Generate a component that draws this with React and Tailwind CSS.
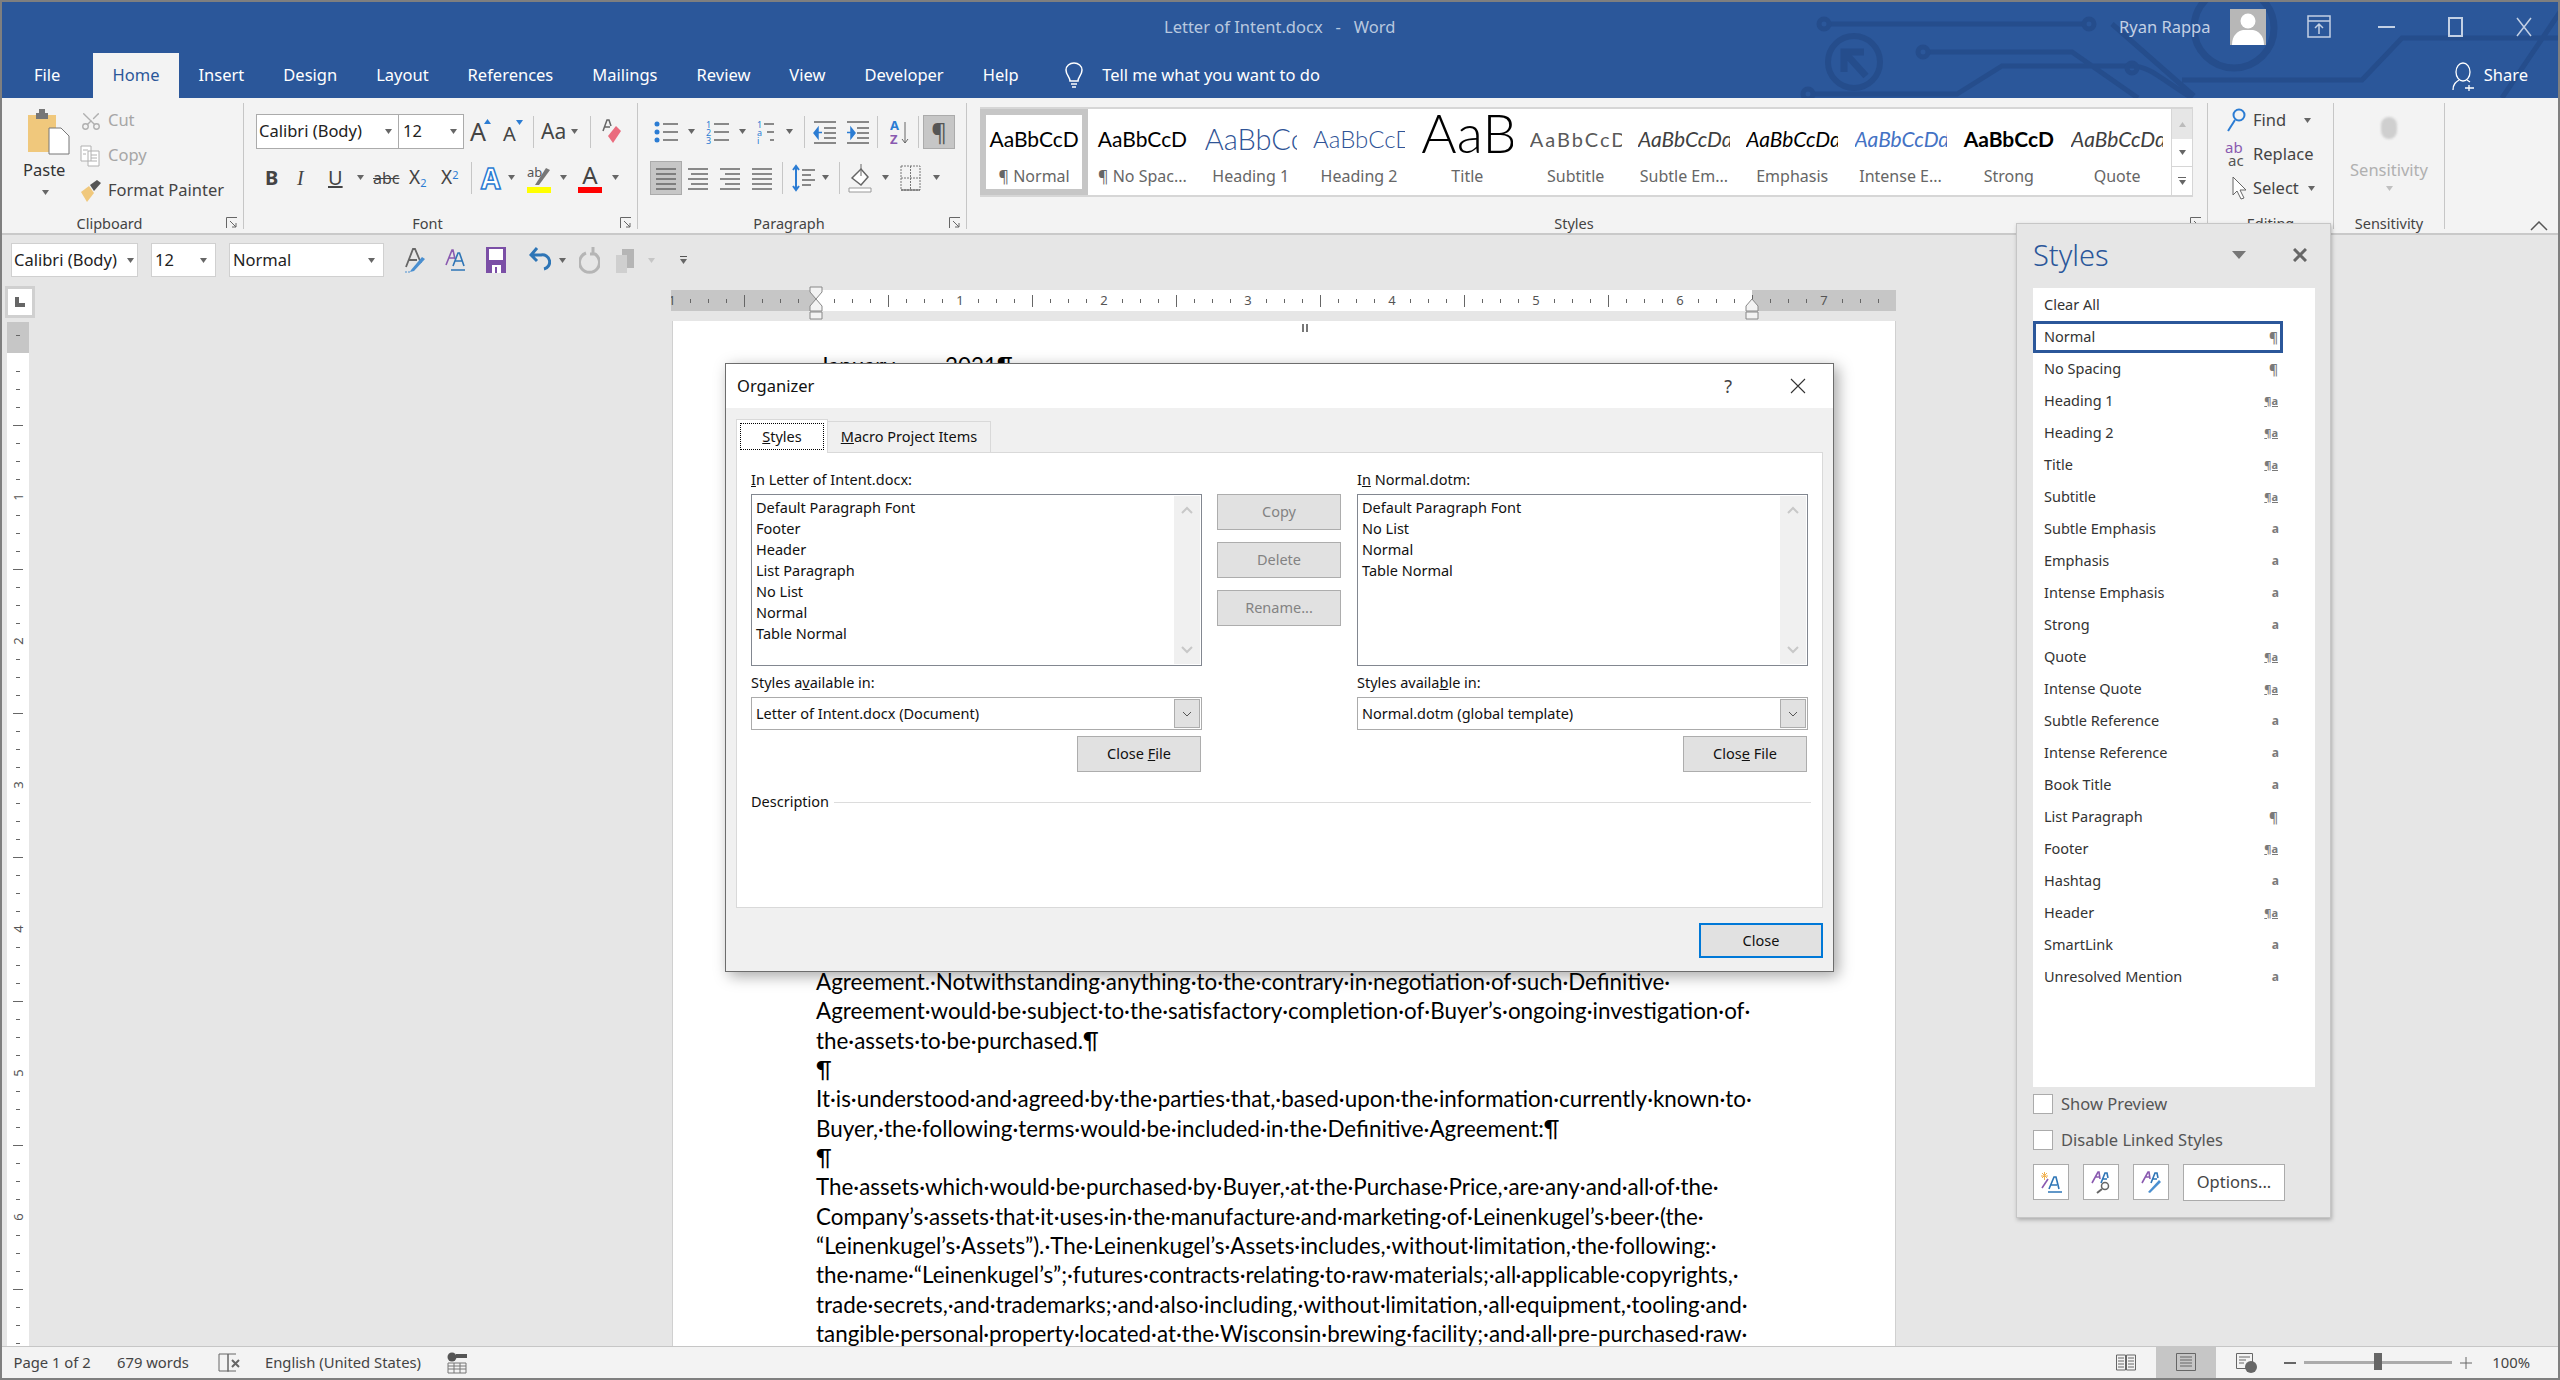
import { Scissors } from 'lucide-react';

const tabs = ['Insert', 'Design', 'Layout', 'References', 'Mailings', 'Review', 'View', 'Developer', 'Help'];

const gallery = [
  { label: '¶ Normal', text: 'AaBbCcD', cls: 'text-[21px] text-black', selected: true },
  { label: '¶ No Spac...', text: 'AaBbCcD', cls: 'text-[21px] text-black' },
  { label: 'Heading 1', text: 'AaBbCcDd', cls: 'text-[29px] font-light text-[#2f5496]' },
  { label: 'Heading 2', text: 'AaBbCcDd', cls: 'text-[24px] font-light text-[#2f5496]' },
  { label: 'Title', text: 'AaB', cls: 'text-[54px] font-light text-black leading-[48px] -mt-[12px]' },
  { label: 'Subtitle', text: 'AaBbCcDd', cls: 'text-[20px] tracking-[2px] text-[#5a5a5a]' },
  { label: 'Subtle Em...', text: 'AaBbCcDd', cls: 'text-[21px] italic text-[#404040]' },
  { label: 'Emphasis', text: 'AaBbCcDd', cls: 'text-[21px] italic text-black' },
  { label: 'Intense E...', text: 'AaBbCcDd', cls: 'text-[21px] italic text-[#4472c4]' },
  { label: 'Strong', text: 'AaBbCcD', cls: 'text-[21px] font-bold text-black' },
  { label: 'Quote', text: 'AaBbCcDd', cls: 'text-[21px] italic text-[#404040]' },
];

const paneStyles = [
  ['Clear All', ''], ['Normal', 'p'], ['No Spacing', 'p'], ['Heading 1', 'l'], ['Heading 2', 'l'], ['Title', 'l'], ['Subtitle', 'l'],
  ['Subtle Emphasis', 'a'], ['Emphasis', 'a'], ['Intense Emphasis', 'a'], ['Strong', 'a'], ['Quote', 'l'], ['Intense Quote', 'l'],
  ['Subtle Reference', 'a'], ['Intense Reference', 'a'], ['Book Title', 'a'], ['List Paragraph', 'p'], ['Footer', 'l'], ['Hashtag', 'a'],
  ['Header', 'l'], ['SmartLink', 'a'], ['Unresolved Mention', 'a'],
];

const docLines = [
  'Agreement.·Notwithstanding·anything·to·the·contrary·in·negotiation·of·such·Definitive·',
  'Agreement·would·be·subject·to·the·satisfactory·completion·of·Buyer’s·ongoing·investigation·of·',
  'the·assets·to·be·purchased.¶',
  '¶',
  'It·is·understood·and·agreed·by·the·parties·that,·based·upon·the·information·currently·known·to·',
  'Buyer,·the·following·terms·would·be·included·in·the·Definitive·Agreement:¶',
  '¶',
  'The·assets·which·would·be·purchased·by·Buyer,·at·the·Purchase·Price,·are·any·and·all·of·the·',
  'Company’s·assets·that·it·uses·in·the·manufacture·and·marketing·of·Leinenkugel’s·beer·(the·',
  '“Leinenkugel’s·Assets”).·The·Leinenkugel’s·Assets·includes,·without·limitation,·the·following:·',
  'the·name·“Leinenkugel’s”;·futures·contracts·relating·to·raw·materials;·all·applicable·copyrights,·',
  'trade·secrets,·and·trademarks;·and·also·including,·without·limitation,·all·equipment,·tooling·and·',
  'tangible·personal·property·located·at·the·Wisconsin·brewing·facility;·and·all·pre-purchased·raw·',
];

function Drop({ className = '', color = '#666' }) {
  return (
    <svg width="7" height="5" viewBox="0 0 7 5" className={`shrink-0 ${className}`}>
      <path d="M0 0h7L3.5 5z" fill={color} />
    </svg>
  );
}

function Sep({ className = '' }) {
  return <div className={`w-px h-[32px] bg-[#c6c6c6] shrink-0 ${className}`} />;
}

function Launcher() {
  return (
    <svg width="12" height="12" viewBox="0 0 12 12" className="shrink-0">
      <path d="M.5 11V.5H11M4 4l6 6M10 6v4H6" fill="none" stroke="#666" />
    </svg>
  );
}

function Group({ width, label, launcher, children }) {
  return (
    <div className={`${width} h-[126px] mt-[5px] border-r border-[#c6c6c6] flex flex-col shrink-0`}>
      <div className="h-[111px] shrink-0">{children}</div>
      <div className={`h-[20px] shrink-0 relative flex items-center justify-center text-[14.5px] text-[#444] ${launcher ? 'pr-[26px]' : ''}`}>
        {label}
        {launcher && <div className="absolute right-[5px] top-[3px]"><Launcher /></div>}
      </div>
    </div>
  );
}

function Lines({ w = 20, rows, x = [] }) {
  return (
    <svg width={w} height="24" viewBox={`0 0 ${w} 24`} className="shrink-0">
      {rows.map((y, i) => (
        <path key={i} d={`M${x[i] ?? 0} ${y}H${w}`} stroke="#666" strokeWidth="1.5" />
      ))}
    </svg>
  );
}

function ListIcon({ kind }) {
  const marks = kind === 'bullet'
    ? [4, 12, 20].map(y => <circle key={y} cx="3" cy={y} r="2.5" fill="#2b7cd3" />)
    : ['1', '2', '3'].map((t, i) => (
        <text key={t} x="1" y={8 + i * 8} fontSize="9" fill="#2b7cd3">{kind === 'multi' ? ['1', 'a', 'i'][i] : t}</text>
      ));
  return (
    <svg width="24" height="24" viewBox="0 0 24 24" className="shrink-0">
      {marks}
      {[4, 12, 20].map((y, i) => (
        <path key={y} d={`M${kind === 'multi' ? 8 + i * 3 : 9} ${y}H${kind === 'multi' ? 18 : 24}`} stroke="#666" strokeWidth="1.5" />
      ))}
    </svg>
  );
}

function Indent({ flip }) {
  return (
    <svg width="24" height="24" viewBox="0 0 24 24" className="shrink-0">
      <path d="M1 2h22M11 8h12M11 13h12M11 18h12M1 23h22" stroke="#666" strokeWidth="1.4" />
      <path d={flip ? 'M1 12.500h5M5 8l4 5-4 5z' : 'M9 12.500H4M5 8l-4 5 4 5z'} fill="#2b7cd3" stroke="#2b7cd3" strokeWidth="1.5" />
    </svg>
  );
}

function ClearFormatIcon() {
  return (
    <svg width="22" height="26" viewBox="0 0 22 26" className="shrink-0">
      <path d="M2 20 9 2h2l6 14M5 13h8" fill="none" stroke="#666" strokeWidth="1.800" />
      <path d="M7 23 18 10l3 2-11 12-4 1z" fill="#4a8fd0" />
      <path d="M1 25h5" stroke="#4a8fd0" strokeDasharray="2 1" />
    </svg>
  );
}

function TwoAIcon() {
  return (
    <svg width="20" height="26" viewBox="0 0 20 26" className="shrink-0">
      <path d="M1 18 7 3h1l2 9M4 11h5" fill="none" stroke="#8a5ab0" strokeWidth="1.600" />
      <path d="M8 19 13 6h1.500L19 19M10 14h7M6 23h14" fill="none" stroke="#2e75b6" strokeWidth="1.600" />
    </svg>
  );
}

function PaneIcon({ kind }) {
  return (
    <svg width="22" height="24" viewBox="0 0 22 24">
      {kind === 'new' && <path d="M1 6h7M4.500 2v8M2 3l5 5M7 3 2 8" stroke="#f0b050" />}
      <path d={kind === 'new' ? 'M2 18 8 9' : 'M2 13 8 2h1l1 7M5 7h4'} fill="none" stroke="#8a5ab0" strokeWidth="1.6" />
      <path d={kind === 'new' ? 'M9 19 14 7h2l3 12M11 15h6M8 22h14' : 'M11 13 15 3h2l1 5M13 9h4'} fill="none" stroke="#2e75b6" strokeWidth="1.6" />
      {kind === 'find' && <><circle cx="15" cy="16" r="3.500" fill="none" stroke="#666" strokeWidth="1.500" /><path d="M12 19l-5 4" stroke="#666" strokeWidth="2" /></>}
      {kind === 'pen' && <path d="M8 22 19 10l2 2L10 23z" fill="#4a8fd0" />}
    </svg>
  );
}

function Circuit() {
  return (
    <svg width="2558" height="96" viewBox="0 2 2558 96" className="absolute left-0 top-0 pointer-events-none" fill="none" stroke="#254d8c" strokeWidth="5">
      <path d="M1826 24h257M1925 52h145l66 46M1810 94h145l45-28h130c18 0 30 14 60 32M2110 24l82 72M2180 80h180l40-42h158M2500 98l58-86" />
      <circle cx="1822" cy="24" r="5" />
      <circle cx="2087" cy="24" r="5" />
      <circle cx="1921" cy="52" r="5" />
      <circle cx="1806" cy="94" r="5" />
      <circle cx="2130" cy="68" r="5" />
      <circle cx="1852" cy="62" r="26" strokeWidth="6" />
      <circle cx="2232" cy="28" r="40" strokeWidth="7" />
      <path d="M1842 72V52h20M1844 54l20 22" strokeWidth="7" />
    </svg>
  );
}

function HRuler() {
  const ticks = [];
  for (let k = -8; k <= 60; k++) ticks.push(k);
  return (
    <svg width="1225" height="34" viewBox="671 287 1225 34" className="shrink-0">
      <rect x="671" y="291" width="1225" height="21" fill="#fff" />
      <rect x="671" y="291" width="145" height="21" fill="#c6c6c6" />
      <rect x="1752" y="291" width="144" height="21" fill="#c6c6c6" />
      {ticks.map(k => {
        const x = 816 + 18 * k;
        if (k === 0) return null;
        if (k % 8 === 0) {
          return <text key={k} x={x} y="306" fontSize="13" fill="#555" textAnchor="middle">{Math.abs(k / 8)}</text>;
        }
        const h = k % 4 === 0 ? 6 : 2;
        return <path key={k} d={`M${x + 0.5} ${302 - h}V${302 + h}`} stroke="#666" />;
      })}
      <path d="M810 288h12v5l-6 7-6-7zM810 312v-5l6-7 6 7v5zM810 313h12v7h-12z" fill="#f3f3f3" stroke="#888" />
      <path d="M1746 312v-5l6-7 6 7v5zM1746 313h12v7h-12z" fill="#f3f3f3" stroke="#888" />
    </svg>
  );
}

function VRuler() {
  const ticks = [];
  for (let k = -1; k <= 56; k++) ticks.push(k);
  return (
    <svg width="22" height="1025" viewBox="7 321 22 1025" className="shrink-0">
      <rect x="7" y="321" width="22" height="1025" fill="#fff" />
      <rect x="7" y="321" width="22" height="31" fill="#c6c6c6" />
      {ticks.map(k => {
        const y = 352 + 18 * k;
        if (k === 0) return null;
        if (k % 8 === 0) {
          return <text key={k} x="18" y={y} fontSize="13" fill="#555" textAnchor="middle" dominantBaseline="central" transform={`rotate(-90 18 ${y})`}>{k / 8}</text>;
        }
        const h = k % 4 === 0 ? 5 : 2;
        return <path key={k} d={`M${18 - h} ${y + 0.5}H${18 + h}`} stroke="#666" />;
      })}
    </svg>
  );
}

function StyleMark({ type }) {
  if (type === 'p') return <span className="text-[14px] font-semibold text-[#7a7a7a] mr-[1px]">¶</span>;
  if (type === 'l') return <span className="text-[11px] font-bold underline text-[#7a7a7a] mr-[1px]">¶a</span>;
  if (type === 'a') return <span className="text-[12px] font-bold text-[#7a7a7a]">a</span>;
  return null;
}

function ListBox({ items }) {
  return (
    <div className="h-[172px] border border-[#828790] bg-white flex text-[14.5px] text-[#111]">
      <div className="flex-1 pl-[4px] pt-[2px]">
        {items.map(t => <div key={t} className="h-[21px] leading-[21px]">{t}</div>)}
      </div>
      <div className="w-[26px] my-[1px] mr-[1px] bg-[#f0f0f0] flex flex-col justify-between items-center py-[10px]">
        <svg width="12" height="8" viewBox="0 0 12 8"><path d="M1 7l5-5 5 5" fill="none" stroke="#c8c8c8" strokeWidth="2" /></svg>
        <svg width="12" height="8" viewBox="0 0 12 8"><path d="M1 1l5 5 5-5" fill="none" stroke="#c8c8c8" strokeWidth="2" /></svg>
      </div>
    </div>
  );
}

function Combo({ text }) {
  return (
    <div className="h-[33px] mt-[4px] border border-[#ababab] bg-white flex items-center text-[14.5px] text-[#111]">
      <div className="flex-1 pl-[4px]">{text}</div>
      <div className="w-[26px] h-[29px] mr-[1px] bg-[#e1e1e1] border border-[#adadad] flex items-center justify-center">
        <svg width="10" height="6" viewBox="0 0 10 6"><path d="M1 1l4 4 4-4" fill="none" stroke="#555" /></svg>
      </div>
    </div>
  );
}

function DlgBtn({ children, disabled, className = '' }) {
  return (
    <div className={`w-[124px] h-[36px] bg-[#e1e1e1] border border-[#adadad] flex items-center justify-center text-[14.5px] ${disabled ? 'text-[#838383]' : 'text-[#111]'} ${className}`}>
      {children}
    </div>
  );
}

export default function App() {
  return (
    <div className="w-[2560px] h-[1380px] relative overflow-hidden flex flex-col border-2 border-[#7f7f7f] bg-[#e6e6e6] font-['Noto_Sans',sans-serif]">
      {/* Title bar and tabs */}
      <div className="h-[96px] shrink-0 bg-[#2b579a] relative text-white">
        <Circuit />
        <div className="h-[51px] relative flex items-center">
          <div className="ml-[1162px] w-[236px] text-[16.500px] text-[#b8c8df] whitespace-pre">Letter of Intent.docx   -   Word</div>
          <div className="ml-[719px] w-[95px] text-[16.500px] text-[#c3d0e4] whitespace-nowrap">Ryan Rappa</div>
          <div className="ml-[16px] w-[36px] h-[36px] bg-[#b7b7b7] mt-[-2px] overflow-hidden shrink-0">
            <svg width="36" height="36" viewBox="0 0 36 36"><circle cx="18" cy="12" r="7.500" fill="#fff" /><path d="M2 36c0-10 6-14 11-15h10c5 1 11 5 11 15z" fill="#fff" /></svg>
          </div>
          <svg width="26" height="26" viewBox="0 0 26 26" className="ml-[40px] mt-[-2px]" fill="none" stroke="#c3d0e4" strokeWidth="1.500"><path d="M2 2h22v21H2zM2 7h22M13 20v-9M9 14l4-4 4 4" /></svg>
          <div className="ml-[46px] w-[17px] h-[2px] bg-[#c3d0e4] mt-[-2px]" />
          <div className="ml-[53px] w-[15px] h-[20px] border-2 border-[#c3d0e4] mt-[-2px]" />
          <svg width="16" height="20" viewBox="0 0 16 20" className="ml-[53px] mt-[-2px]" fill="none" stroke="#c3d0e4" strokeWidth="1.500"><path d="M1 1l14 18M15 1 1 19" /></svg>
        </div>
        <div className="h-[45px] relative flex items-stretch text-[16.500px]">
          <div className="w-[91px] pl-[32px] flex items-center">File</div>
          <div className="w-[86px] bg-[#f3f3f3] text-[#2b579a] flex items-center justify-center">Home</div>
          {tabs.map(t => (
            <div key={t} className="px-[19.500px] flex items-center">{t}</div>
          ))}
          <svg width="20" height="28" viewBox="0 0 20 28" className="ml-[26px] self-center" fill="none" stroke="#fff" strokeWidth="1.500"><path d="M6 19c0-4-4-6-4-11a8 7 0 0 1 16 0c0 5-4 7-4 11zM7 22h6M8 25h4" /></svg>
          <div className="ml-[18px] flex items-center">Tell me what you want to do</div>
          <div className="ml-auto mr-[30px] flex items-center gap-[8px]">
            <svg width="24" height="30" viewBox="0 0 24 30" fill="none" stroke="#fff" strokeWidth="1.300"><ellipse cx="11" cy="11" rx="7" ry="9" /><path d="M1 29c0-6 3-8 6-10M15 19l3 2M17 24v6M13 27h9" /></svg>
            <span>Share</span>
          </div>
        </div>
      </div>

      {/* Ribbon */}
      <div className="h-[137px] shrink-0 bg-[#f3f3f3] border-b-2 border-[#c9c9c9] flex relative text-[#444]">
        <Group width="w-[242px]" label="Clipboard" launcher>
          <div className="flex">
            <div className="w-[78px] pl-[26px] pt-[6px] flex flex-col">
              <svg width="42" height="46" viewBox="0 0 42 46">
                <path d="M0 6h28v37H0z" fill="#f0c87c" />
                <path d="M8 4h3V0h6v4h3v6H8z" fill="#777" />
                <path d="M21 19h12l8 8v18H21z" fill="#fff" stroke="#777" />
              </svg>
              <div className="text-[16.500px] mt-[3px] ml-[-5px] text-[#333]">Paste</div>
              <Drop className="mt-[7px] ml-[14px]" />
            </div>
            <div className="text-[16.500px] flex flex-col">
              {[
                ['Cut', <Scissors key="c" size={22} strokeWidth={1.5} color="#b0b0b0" className="-rotate-90" />],
                ['Copy', <svg key="p" width="20" height="22" viewBox="0 0 20 22" fill="#fff" stroke="#b0b0b0"><path d="M1 1h10v15H1zM8 6h11v15H8zM3 5h5M3 9h3M11 10h6M11 13h6M11 16h6" /></svg>],
              ].map(([t, icon]) => (
                <div key={t} className="h-[35px] flex items-center text-[#a6a6a6]">
                  <div className="w-[28px] flex">{icon}</div>
                  {t}
                </div>
              ))}
              <div className="h-[35px] flex items-center">
                <svg width="22" height="22" viewBox="0 0 22 22" className="w-[22px] mr-[6px]"><path d="M1 12l8-6 5 7-7 9z" fill="#f0c87c" /><path d="M10 5l7-5 4 3-7 8z" fill="#555" /></svg>
                Format Painter
              </div>
            </div>
          </div>
        </Group>

        <Group width="w-[394px]" label="Font" launcher>
          <div className="pt-[11px]">
            <div className="h-[35px] flex items-center">
              <div className="ml-[12px] w-[208px] h-[35px] bg-white border border-[#ababab] flex text-[16.500px] text-[#222] shrink-0">
                <div className="w-[142px] border-r border-[#ababab] flex items-center pl-[2px] pr-[6px] justify-between">Calibri (Body)<Drop /></div>
                <div className="flex-1 flex items-center pl-[4px] pr-[6px] justify-between">12<Drop /></div>
              </div>
              <div className="ml-[6px] w-[18px] relative text-[25px] leading-none">A<Drop className="absolute right-[-3px] top-0 rotate-180" color="#2b7cd3" /></div>
              <div className="ml-[15px] w-[14px] relative text-[20px] leading-none mt-[4px]">A<Drop className="absolute right-[-6px] top-[-4px]" color="#2b7cd3" /></div>
              <Sep className="ml-[16px]" />
              <div className="ml-[7px] w-[24px] text-[21px] leading-none">Aa</div>
              <Drop className="ml-[6px]" />
              <Sep className="ml-[12px]" />
              <svg width="21" height="26" viewBox="0 0 21 26" className="ml-[10px]"><path d="M2 12 6 1h2l2 6M4 8h5" fill="none" stroke="#666" strokeWidth="1.500" /><path d="M7 17 15 7l5 5-8 12z" fill="#ea6b7d" /></svg>
            </div>
            <div className="h-[35px] mt-[11px] flex items-center text-[#444]">
              <span className="ml-[21px] w-[13px] text-[20px] font-bold">B</span>
              <span className="ml-[19px] w-[11px] text-[20px] italic font-['Liberation_Serif',serif]">I</span>
              <span className="ml-[20px] w-[15px] text-[20px] underline">U</span>
              <Drop className="ml-[14px]" />
              <span className="ml-[9px] w-[26px] text-[16px] line-through">abc</span>
              <span className="ml-[10px] w-[20px] text-[19px] leading-none">X<sub className="text-[11px] text-[#2b7cd3]">2</sub></span>
              <span className="ml-[12px] w-[21px] text-[19px] leading-none">X<sup className="text-[11px] text-[#2b7cd3]">2</sup></span>
              <Sep className="ml-[9px]" />
              <span className="ml-[9px] w-[21px] text-[28px] leading-none text-white [-webkit-text-stroke:1.500px_#2b7cd3] font-bold">A</span>
              <Drop className="ml-[6px]" />
              <div className="ml-[12px] w-[24px] h-[30px] flex flex-col justify-end">
                <svg width="24" height="20" viewBox="0 0 24 20"><text x="0" y="11" fontSize="13" fill="#555">ab</text><path d="M8 19 19 2l4 2-11 15z" fill="#777" /></svg>
                <div className="h-[6px] bg-[#ffff00] mt-[1px]" />
              </div>
              <Drop className="ml-[9px]" />
              <div className="ml-[11px] w-[24px] h-[30px] flex flex-col items-center leading-none">
                <span className="text-[24px] h-[24px]">A</span>
                <div className="w-full h-[6px] bg-[#ff0000]" />
              </div>
              <Drop className="ml-[10px]" />
            </div>
          </div>
        </Group>

        <Group width="w-[329px]" label="Paragraph" launcher>
          <div className="pt-[11px]">
            <div className="h-[35px] flex items-center">
              <div className="ml-[16px]"><ListIcon kind="bullet" /></div>
              <Drop className="ml-[10px]" />
              <div className="ml-[10px]"><ListIcon kind="num" /></div>
              <Drop className="ml-[10px]" />
              <div className="ml-[10px]"><ListIcon kind="multi" /></div>
              <Drop className="ml-[6px]" />
              <Sep className="ml-[11px]" />
              <div className="ml-[8px]"><Indent /></div>
              <div className="ml-[9px]"><Indent flip /></div>
              <Sep className="ml-[7px]" />
              <div className="ml-[12px] w-[20px] h-[28px] relative">
                <svg width="20" height="28" viewBox="0 0 20 28"><text x="0" y="12" fontSize="13" fontWeight="700" fill="#2b7cd3">A</text><text x="0" y="26" fontSize="13" fontWeight="700" fill="#8a5ab0">Z</text><path d="M15 4v21M12 21l3 4 3-4" fill="none" stroke="#666" /></svg>
              </div>
              <Sep className="ml-[8px]" />
              <div className="ml-[4px] w-[32px] h-[34px] bg-[#c6c6c6] border border-[#ababab] flex items-center justify-center text-[24px] text-[#555] leading-none">¶</div>
            </div>
            <div className="h-[35px] mt-[11px] flex items-center">
              <div className="ml-[12px] w-[32px] h-[34px] bg-[#c6c6c6] border border-[#ababab] flex items-center justify-center"><Lines w={20} rows={[3, 8, 13, 18, 23]} x={[0, 0, 0, 0, 0]} /></div>
              <div className="ml-[6px]"><Lines rows={[3, 8, 13, 18, 23]} x={[0, 3, 0, 3, 0]} /></div>
              <div className="ml-[12px]"><Lines rows={[3, 8, 13, 18, 23]} x={[0, 5, 0, 5, 0]} /></div>
              <div className="ml-[12px]"><Lines rows={[3, 8, 13, 18, 23]} /></div>
              <Sep className="ml-[10px]" />
              <svg width="23" height="28" viewBox="0 0 23 28" className="ml-[9px]"><path d="M4 2v24M1 6l3-4 3 4M1 22l3 4 3-4" fill="none" stroke="#2b7cd3" strokeWidth="2" /><path d="M10 6h13M10 11h9M10 16h13M10 21h9" stroke="#666" strokeWidth="1.500" /></svg>
              <Drop className="ml-[7px]" />
              <Sep className="ml-[10px]" />
              <svg width="24" height="30" viewBox="0 0 24 30" className="ml-[8px]"><path d="M4 15 13 6l7 8-7 8z" fill="#fff" stroke="#666" strokeWidth="1.500" /><path d="M13 1v12" stroke="#666" /><path d="M1 25h22v4H1z" fill="#fff" stroke="#999" /></svg>
              <Drop className="ml-[10px]" />
              <svg width="21" height="26" viewBox="0 0 21 26" className="ml-[11px]" fill="none" stroke="#777" strokeDasharray="2 1"><path d="M1 1h19v24H1zM10.500 1v24M1 13h19" /><path d="M1 25h19" stroke="#555" strokeDasharray="none" /></svg>
              <Drop className="ml-[12px]" />
            </div>
          </div>
        </Group>

        <Group width="w-[1241px]" label="Styles" launcher>
          <div className="ml-[13px] mt-[4px] w-[1213px] h-[90px] flex bg-white border-y-2 border-[#d6d6d6]">
            <div className="flex-1 flex">
              {gallery.map(g => (
                <div key={g.label} className={`w-[108.300px] shrink-0 font-['Lato',sans-serif] flex flex-col items-center ${g.selected ? 'border-[6px] border-[#c6c6c6]' : 'pt-[6px]'}`}>
                  <div className="w-[92px] h-[48px] overflow-hidden whitespace-nowrap flex items-center">
                    <span className={`mx-auto ${g.cls}`}>{g.text}</span>
                  </div>
                  <div className="h-[26px] flex items-center text-[16px] text-[#666] font-['Noto_Sans',sans-serif] whitespace-nowrap">{g.label}</div>
                </div>
              ))}
            </div>
            <div className="w-[22px] shrink-0 border-x border-[#d6d6d6] flex flex-col">
              <div className="h-[30px] bg-[#e6e6e6] flex items-center justify-center"><Drop className="rotate-180" color="#bbb" /></div>
              <div className="h-[28px] border-b border-[#d6d6d6] flex items-center justify-center"><Drop /></div>
              <div className="flex-1 flex flex-col items-center justify-center gap-[2px]"><div className="w-[8px] h-px bg-[#666]" /><Drop /></div>
            </div>
          </div>
        </Group>

        <Group width="w-[126px]" label="Editing">
          <div className="text-[16.500px] flex flex-col">
            <div className="h-[34px] flex items-center">
              <svg width="19" height="24" viewBox="0 0 19 24" className="ml-[19px]" fill="none" stroke="#2b7cd3" strokeWidth="2"><circle cx="12" cy="7" r="5.500" /><path d="M8 12 1 23" /></svg>
              <span className="ml-[7px]">Find</span>
              <Drop className="ml-[18px]" />
            </div>
            <div className="h-[34px] flex items-center">
              <div className="ml-[17px] w-[25px] text-[15px] leading-[13px]"><div className="text-[#8a5ab0]">ab</div><div className="text-[#555] ml-[3px]">ac</div></div>
              <span className="ml-[3px]">Replace</span>
            </div>
            <div className="h-[34px] flex items-center">
              <svg width="15" height="24" viewBox="0 0 15 24" className="ml-[24px]"><path d="M1 1v18l4-4 4 8 3-1-4-8h6z" fill="#fff" stroke="#666" /></svg>
              <span className="ml-[6px]">Select</span>
              <Drop className="ml-[9px]" />
            </div>
          </div>
        </Group>

        <Group width="w-[111px]" label="Sensitivity">
          <div className="flex flex-col items-center text-[16.500px] text-[#b0b0b0]">
            <div className="w-[16px] h-[22px] mt-[14px] rounded-full bg-[#cfcfcf] blur-[1px]" />
            <div className="mt-[19px] whitespace-nowrap">Sensitivity</div>
            <Drop className="mt-[3px]" color="#c0c0c0" />
          </div>
        </Group>

        <svg width="18" height="10" viewBox="0 0 18 10" className="ml-[85px] mt-[123px]" fill="none" stroke="#555" strokeWidth="1.500"><path d="M1 9l8-8 8 8" /></svg>
      </div>

      {/* Workspace */}
      <div className="flex-1 min-h-0 flex flex-col">
        {/* Quick access toolbar */}
        <div className="h-[34px] mt-[8px] shrink-0 flex items-center text-[16.500px] text-[#222]">
          <div className="ml-[9px] w-[127px] h-[34px] bg-white border border-[#d0d0d0] flex items-center justify-between pl-[2px] pr-[3px] whitespace-nowrap">Calibri (Body)<Drop /></div>
          <div className="ml-[13px] w-[65px] h-[34px] bg-white border border-[#d0d0d0] flex items-center justify-between pl-[3px] pr-[8px]">12<Drop /></div>
          <div className="ml-[13px] w-[155px] h-[34px] bg-white border border-[#d0d0d0] flex items-center justify-between pl-[3px] pr-[8px]">Normal<Drop /></div>
          <div className="ml-[20px]"><ClearFormatIcon /></div>
          <div className="ml-[19px]"><TwoAIcon /></div>
          <svg width="20" height="26" viewBox="0 0 20 26" className="ml-[21px]"><path d="M0 0h20v26H0z" fill="#7b4fa6" /><path d="M3 2h14v11H3z" fill="#fff" /><path d="M6 18h9v8H6z" fill="#fff" /><path d="M9 20h2v6H9z" fill="#7b4fa6" /></svg>
          <svg width="22" height="28" viewBox="0 0 22 28" className="ml-[23px]" fill="none" stroke="#2e75b6" strokeWidth="3"><path d="M8 2 2 9l6 6M3 9h9a7 7 0 0 1 3 14" /></svg>
          <Drop className="ml-[8px]" />
          <svg width="21" height="28" viewBox="0 0 21 28" className="ml-[13px]" fill="none" stroke="#b5b5b5" strokeWidth="3"><path d="M7 7a10 10 0 1 0 7 0M14 1v7h-3" /></svg>
          <svg width="20" height="28" viewBox="0 0 20 28" className="ml-[15px]"><path d="M7 3h12v19H7z" fill="#b5b5b5" /><path d="M1 9h11v18H1z" fill="#cfcfcf" /></svg>
          <Drop className="ml-[13px]" color="#c6c6c6" />
          <div className="ml-[25px] flex flex-col items-center gap-[2px]"><div className="w-[7px] h-px bg-[#555]" /><Drop /></div>
        </div>

        {/* Tab selector and horizontal ruler */}
        <div className="h-[35px] mt-[9px] shrink-0 flex">
          <div className="ml-[3px] w-[30px] h-[32px] bg-[#d0d0d0] p-[3px]">
            <div className="w-full h-full bg-white flex items-center justify-center">
              <div className="w-[10px] h-[10px] border-l-[4px] border-b-[4px] border-[#666]" />
            </div>
          </div>
          <div className="ml-[636px]"><HRuler /></div>
        </div>

        {/* Document area */}
        <div className="flex-1 min-h-0 flex overflow-hidden">
          <div className="ml-[5px] pt-[1px]"><VRuler /></div>
          <div className="ml-[643px] w-[1224px] bg-white border-x border-[#d0d0d0] pl-[143px] pt-[30px] relative font-['Lato',sans-serif] text-[22.400px] leading-[29.330px] text-black whitespace-nowrap overflow-hidden">
            <div className="absolute left-[629px] top-[3px] flex gap-[2px]">
              <div className="w-[2px] h-[8px] bg-[#777]" />
              <div className="w-[2px] h-[8px] bg-[#777]" />
            </div>
            <div className="flex">
              <span className="w-[129px] pl-[3px]">January····</span>
              <span>2021¶</span>
            </div>
            <div className="h-[586.600px]" />
            {docLines.map((l, i) => <div key={i} className="h-[29.330px]">{l}</div>)}
          </div>
        </div>

        {/* Status bar */}
        <div className="h-[32px] shrink-0 bg-[#f3f3f3] border-t border-[#c6c6c6] flex items-center text-[14.800px] text-[#444] whitespace-nowrap">
          <span className="ml-[11.500px] w-[78px]">Page 1 of 2</span>
          <span className="ml-[25.500px] w-[73px]">679 words</span>
          <svg width="22" height="22" viewBox="0 0 22 22" className="ml-[28px]" fill="none" stroke="#666"><path d="M1 2h9v17H1zM10 2h8M10 19h8M10 2v18" /><path d="M14 8l7 7M21 8l-7 7" strokeWidth="2" /></svg>
          <span className="ml-[25px] w-[155px]">English (United States)</span>
          <svg width="20" height="22" viewBox="0 0 20 22" className="ml-[27px]"><circle cx="5" cy="5" r="4.500" fill="#555" /><path d="M9 2h11v4H9z" fill="#555" /><path d="M1 11h18v10H1zM1 14h18M1 17h18M7 11v10M13 11v10" fill="none" stroke="#777" /></svg>

          <svg width="20" height="18" viewBox="0 0 20 18" className="ml-auto" fill="none" stroke="#666"><path d="M.5 1h9v15h-9zM10.500 1h9v15h-9zM2 4h6M2 7h6M2 10h6M2 13h6M12 4h6M12 7h6M12 10h6M12 13h6" /></svg>
          <div className="ml-[20px] w-[60px] h-[32px] -mt-px bg-[#c6c6c6] flex items-center justify-center">
            <svg width="20" height="18" viewBox="0 0 20 18" fill="none" stroke="#666"><path d="M.5.500h19v17H.5zM4 4h12M4 7h12M4 10h12M4 13h12" /></svg>
          </div>
          <svg width="21" height="20" viewBox="0 0 21 20" className="ml-[20px]"><path d="M.5.500h16v15H.5zM3 4h11M3 7h7M3 10h5" fill="none" stroke="#666" /><circle cx="15" cy="14" r="6" fill="#666" /></svg>
          <div className="ml-[27px] w-[12px] h-[2px] bg-[#666]" />
          <div className="ml-[8px] w-[148px] h-[3px] bg-[#ababab] relative">
            <div className="absolute left-[70px] top-[-8px] w-[8px] h-[17px] bg-[#666]" />
          </div>
          <svg width="12" height="12" viewBox="0 0 12 12" className="ml-[8px]"><path d="M6 0v12M0 6h12" stroke="#666" /></svg>
          <span className="ml-[20px] mr-[28px]">100%</span>
        </div>
      </div>

      {/* Organizer dialog */}
      <div className="absolute left-[723px] top-[361px] w-[1109px] h-[609px] bg-[#f0f0f0] border border-[#6d6d6d] shadow-[4px_4px_14px_rgba(0,0,0,0.35)] flex flex-col text-[#111]">
        <div className="h-[44px] shrink-0 bg-white flex items-center text-[16.500px]">
          <span className="ml-[11px]">Organizer</span>
          <span className="ml-auto text-[18px] text-[#444]">?</span>
          <svg width="16" height="16" viewBox="0 0 16 16" className="ml-[58px] mr-[27px]" fill="none" stroke="#333" strokeWidth="1.100"><path d="M1 1l14 14M15 1 1 15" /></svg>
        </div>
        <div className="pl-[10px] pt-[11px] flex items-end h-[44px] shrink-0 text-[14.500px]">
          <div className="w-[92px] h-[34px] bg-white border-x border-t border-[#d9d9d9] relative z-10 -mb-px p-[3px]">
            <div className="w-full h-full border border-dotted border-black flex items-center justify-center"><span><u>S</u>tyles</span></div>
          </div>
          <div className="w-[163px] h-[31px] bg-[#f0f0f0] border-r border-t border-[#d9d9d9] flex items-center justify-center"><span><u>M</u>acro Project Items</span></div>
        </div>
        <div className="mx-[10px] h-[456px] bg-white border border-[#d9d9d9] text-[14.500px] shrink-0">
          <div className="flex pl-[14px]">
            <div className="w-[451px] flex flex-col">
              <div className="mt-[16px] h-[21px] leading-[21px]"><u>I</u>n Letter of Intent.docx:</div>
              <div className="mt-[4px]"><ListBox items={['Default Paragraph Font', 'Footer', 'Header', 'List Paragraph', 'No List', 'Normal', 'Table Normal']} /></div>
              <div className="mt-[6px] h-[20px] leading-[20px]">Styles a<u>v</u>ailable in:</div>
              <div className="mt-[1px]"><Combo text="Letter of Intent.docx (Document)" /></div>
              <DlgBtn className="self-end mt-[6px] mr-[1px]"><span>Close <u>F</u>ile</span></DlgBtn>
            </div>
            <div className="ml-[15px] mt-[41px] flex flex-col gap-[12px]">
              <DlgBtn disabled>Copy</DlgBtn>
              <DlgBtn disabled>Delete</DlgBtn>
              <DlgBtn disabled>Rename...</DlgBtn>
            </div>
            <div className="ml-[16px] w-[451px] flex flex-col">
              <div className="mt-[16px] h-[21px] leading-[21px]">I<u>n</u> Normal.dotm:</div>
              <div className="mt-[4px]"><ListBox items={['Default Paragraph Font', 'No List', 'Normal', 'Table Normal']} /></div>
              <div className="mt-[6px] h-[20px] leading-[20px]">Styles availa<u>b</u>le in:</div>
              <div className="mt-[1px]"><Combo text="Normal.dotm (global template)" /></div>
              <DlgBtn className="self-end mt-[6px] mr-[1px]"><span>Clos<u>e</u> File</span></DlgBtn>
            </div>
          </div>
          <div className="ml-[14px] mr-[11px] mt-[19px] h-[22px] flex items-center gap-[5px]">
            <span>Description</span>
            <div className="flex-1 h-px bg-[#dcdcdc]" />
          </div>
        </div>
        <div className="flex justify-end pr-[10px] pt-[15px]">
          <div className="w-[124px] h-[35px] bg-[#e1e1e1] border-2 border-[#0078d7] flex items-center justify-center text-[14.500px]">Close</div>
        </div>
      </div>

      {/* Styles pane */}
      <div className="absolute left-[2014px] top-[221px] w-[315px] h-[995px] bg-[#e6e6e6] border border-[#c6c6c6] shadow-[1px_2px_4px_rgba(0,0,0,0.25)] pl-[16px] flex flex-col">
        <div className="h-[64px] shrink-0 flex items-center pb-[2px]">
          <span className="text-[29px] font-light text-[#2b579a]">Styles</span>
          <svg width="14" height="8" viewBox="0 0 14 8" className="ml-[123px]"><path d="M0 0h14L7 8z" fill="#777" /></svg>
          <svg width="14" height="14" viewBox="0 0 14 14" className="ml-[47px]" fill="none" stroke="#666" strokeWidth="3"><path d="M1 1l12 12M13 1 1 13" /></svg>
        </div>
        <div className="w-[282px] h-[799px] bg-white pt-px text-[14.500px] text-[#333] shrink-0">
          {paneStyles.map(([name, type]) => (
            <div key={name} className={`w-[250px] h-[32px] flex items-center justify-between ${name === 'Normal' ? 'border-[3px] border-[#2b579a] pl-[8px] pr-[1px]' : 'pl-[11px] pr-[4px]'}`}>
              <span>{name}</span>
              <StyleMark type={type} />
            </div>
          ))}
        </div>
        <div className="mt-[7px] h-[20px] flex items-center gap-[8px] text-[16.500px] text-[#555]">
          <div className="w-[20px] h-[20px] bg-white border border-[#ababab]" />
          Show Preview
        </div>
        <div className="mt-[16px] h-[20px] flex items-center gap-[8px] text-[16.500px] text-[#555]">
          <div className="w-[20px] h-[20px] bg-white border border-[#ababab]" />
          Disable Linked Styles
        </div>
        <div className="mt-[14px] flex gap-[14px]">
          {['new', 'find', 'pen'].map(k => (
            <div key={k} className="w-[36px] h-[36px] bg-white border border-[#ababab] flex items-center justify-center"><PaneIcon kind={k} /></div>
          ))}
          <div className="w-[102px] h-[37px] bg-white border border-[#ababab] flex items-center justify-center text-[16.500px] text-[#444]">Options...</div>
        </div>
      </div>
    </div>
  );
}
